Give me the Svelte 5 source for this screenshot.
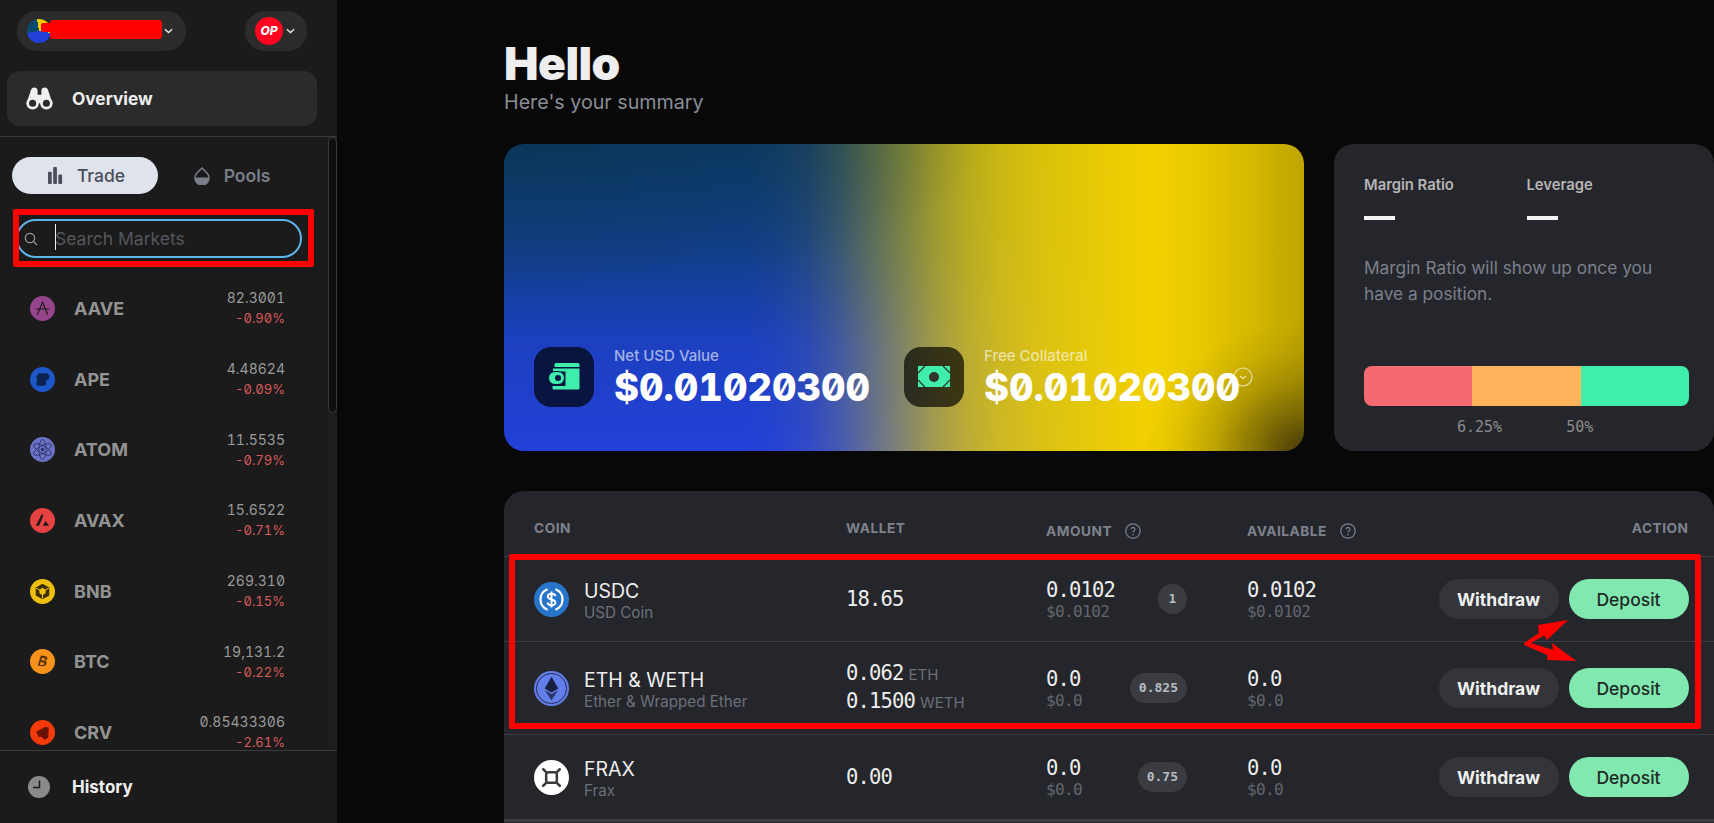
<script lang="ts">
  const markets = [
    { id: "aave", name: "AAVE", price: "82.3001", change: "-0.90%" },
    { id: "ape", name: "APE", price: "4.48624", change: "-0.09%" },
    { id: "atom", name: "ATOM", price: "11.5535", change: "-0.79%" },
    { id: "avax", name: "AVAX", price: "15.6522", change: "-0.71%" },
    { id: "bnb", name: "BNB", price: "269.310", change: "-0.15%" },
    { id: "btc", name: "BTC", price: "19,131.2", change: "-0.22%" },
    { id: "crv", name: "CRV", price: "0.85433306", change: "-2.61%" },
  ];

  const coins = [
    { id: "usdc", name: "USDC", sub: "USD Coin", wallet: [{ v: "18.65", u: "" }], amount: "0.0102", amountUsd: "$0.0102", weight: "1", avail: "0.0102", availUsd: "$0.0102" },
    { id: "eth", name: "ETH & WETH", sub: "Ether & Wrapped Ether", wallet: [{ v: "0.062", u: "ETH" }, { v: "0.1500", u: "WETH" }], amount: "0.0", amountUsd: "$0.0", weight: "0.825", avail: "0.0", availUsd: "$0.0" },
    { id: "frax", name: "FRAX", sub: "Frax", wallet: [{ v: "0.00", u: "" }], amount: "0.0", amountUsd: "$0.0", weight: "0.75", avail: "0.0", availUsd: "$0.0" },
  ];
</script>

{#snippet chevron()}
  <svg class="chev" viewBox="0 0 10 6" width="9" height="6"><path d="M1 1l4 3.6L9 1" fill="none" stroke="#e8e8e8" stroke-width="1.6" /></svg>
{/snippet}

{#snippet help()}
  <svg viewBox="0 0 16 16" width="16" height="16"><circle cx="8" cy="8" r="7.2" fill="none" stroke="#7e828c" stroke-width="1.2" /><path d="M6.1 6.3a1.9 1.9 0 1 1 2.9 1.6c-.7.4-1 .8-1 1.6" fill="none" stroke="#7e828c" stroke-width="1.2" /><circle cx="8" cy="11.6" r=".8" fill="#7e828c" /></svg>
{/snippet}

{#snippet marketIcon(id: string)}
  <svg viewBox="0 0 24 24" width="25" height="25">
    {#if id === "aave"}
      <circle cx="12" cy="12" r="12" fill="#96458d" />
      <path d="M7 18L12 6l5 12M5.500 12.500h13" fill="none" stroke="#1b1b1b" stroke-width="1.100" />
    {:else if id === "ape"}
      <circle cx="12" cy="12" r="12" fill="#1b57c8" />
      <path d="M6 10l2-4h7c3 0 4 2 3.500 4-.4 2-2 2.500-3 2.500V17l-2 1H7l-1-2 1-3z" fill="#0d2450" />
    {:else if id === "atom"}
      <circle cx="12" cy="12" r="12" fill="#6c72c6" />
      <g fill="none" stroke="#2a2d62" stroke-width=".8">
        <ellipse cx="12" cy="12" rx="3.500" ry="9.500" />
        <ellipse cx="12" cy="12" rx="3.500" ry="9.500" transform="rotate(60 12 12)" />
        <ellipse cx="12" cy="12" rx="3.500" ry="9.500" transform="rotate(120 12 12)" />
      </g>
      <circle cx="12" cy="12" r="1.600" fill="#2a2d62" />
    {:else if id === "avax"}
      <circle cx="12" cy="12" r="12" fill="#e84142" />
      <path d="M11 6.500h2l-.2.800L8.700 17H5.500zM14.800 12.500L18.500 17h-6z" fill="#1b1b1b" />
    {:else if id === "bnb"}
      <circle cx="12" cy="12" r="12" fill="#eebf0c" />
      <path d="M12 4.500l6.500 3.700v7.600L12 19.500l-6.500-3.700V8.200zM12 8.500l-3 1.800v3.400l3 1.800 3-1.800v-3.400z" fill="#3a2f08" fill-rule="evenodd" />
      <path d="M12 12.200V19M12 12.200L6 8.800M12 12.200l6-3.400" stroke="#eebf0c" stroke-width="1" />
    {:else if id === "btc"}
      <circle cx="12" cy="12" r="12" fill="#f7931a" />
      <path d="M9.500 6.500h4c2 0 3 1 2.700 2.600-.2 1-.9 1.700-1.800 1.900 1.200.3 1.900 1.200 1.600 2.600-.4 2-1.800 2.900-4 2.900H8l1.500-9.600zM11 8.600l-.4 2.300h2.100c1 0 1.400-.5 1.500-1.200.1-.7-.3-1.100-1.200-1.100zM10.300 12.800l-.4 2.600h2.300c1 0 1.600-.4 1.700-1.300.1-.8-.4-1.300-1.400-1.300z" fill="#5a3408" fill-rule="evenodd" transform="rotate(8 12 12)" />
    {:else}
      <circle cx="12" cy="12" r="12" fill="#f43a0a" />
      <path d="M6 11l9-4.500 3 1-.5 9.500-3.500 2-3-3H8z" fill="#6a1208" />
    {/if}
  </svg>
{/snippet}

{#snippet coinIcon(id: string)}
  <svg viewBox="0 0 36 36" width="35" height="35">
    {#if id === "usdc"}
      <circle cx="18" cy="18" r="18" fill="#2775ca" />
      <path d="M14 7.500a11.200 11.200 0 0 0 0 21M22 7.500a11.200 11.200 0 0 1 0 21" fill="none" stroke="#fff" stroke-width="2.200" />
      <path d="M22 14.500c-.3-1.600-1.800-2.500-4-2.500s-3.800 1-3.800 2.900c0 4.100 7.800 2 7.800 6.200 0 2-1.700 2.900-4 2.900s-3.900-1-4.100-2.700M18 9.800v16.400" fill="none" stroke="#fff" stroke-width="2" />
    {:else if id === "eth"}
      <circle cx="18" cy="18" r="18" fill="#627eea" />
      <circle cx="18" cy="18" r="15.500" fill="none" stroke="#252a4e" stroke-width="1" />
      <path d="M18 6l-7 12 7 4 7-4z" fill="#1a2040" />
      <path d="M18 24l-7-4.500L18 30l7-10.500z" fill="#2b3468" />
    {:else}
      <circle cx="18" cy="18" r="18" fill="#fff" />
      <rect x="12.500" y="12.500" width="11" height="11" rx="2.500" fill="none" stroke="#3a3a3a" stroke-width="2.600" />
      <path d="M12 12L9.500 9.500M24 12l2.500-2.500M12 24l-2.500 2.500M24 24l2.500 2.500" stroke="#3a3a3a" stroke-width="2.600" stroke-linecap="round" />
    {/if}
  </svg>
{/snippet}

<div class="page">
  <aside class="sidebar">
    <div class="top">
      <button class="account">
        <span class="avatar"></span>
        {@render chevron()}
      </button>
      <button class="network">
        <span class="op">OP</span>
        {@render chevron()}
      </button>
    </div>

    <div class="overview">
      <svg viewBox="0 0 28 24" width="27" height="23">
        <path d="M4.500 5C5 2 6.500.5 8.500.5s3.500 1.200 3.500 3.500v4h4V4c0-2.300 1.500-3.500 3.500-3.500S23 2 23.500 5L27.500 17h-27z" fill="#f0f0f0" />
        <circle cx="6.800" cy="17" r="6.500" fill="#f0f0f0" /><circle cx="21.200" cy="17" r="6.500" fill="#f0f0f0" />
        <circle cx="6.800" cy="17" r="3.700" fill="#2b2b2b" /><circle cx="21.200" cy="17" r="3.700" fill="#2b2b2b" />
      </svg>
      <span>Overview</span>
    </div>

    <div class="middle">
      <div class="list">
        <div class="tabs">
          <button class="tab active">
            <svg viewBox="0 0 16 18" width="15" height="17"><rect x="0" y="5" width="4" height="13" rx="1" /><rect x="5.500" y="0" width="4" height="18" rx="1" /><rect x="11" y="8" width="4" height="10" rx="1" /></svg>
            Trade
          </button>
          <button class="tab pools">
            <svg viewBox="0 0 16 18" width="16" height="18"><path d="M8 1l5 5a7 7 0 1 1-10 0z" fill="none" stroke="#7a7e8a" stroke-width="1.500" /><path d="M1 10.500h14a7 7 0 0 1-14 0z" fill="#7a7e8a" /></svg>
            Pools
          </button>
        </div>

        <div class="search">
          <svg viewBox="0 0 14 14" width="14" height="14"><circle cx="6" cy="6" r="4.700" fill="none" stroke="#9a9a9a" stroke-width="1.200" /><path d="M9.500 9.500L13 13" stroke="#9a9a9a" stroke-width="1.200" /></svg>
          <span class="caret"></span>
          <input type="text" placeholder="Search Markets" />
        </div>

        <div class="markets">
          {#each markets as m}
            <div class="market">
              {@render marketIcon(m.id)}
              <span class="market-name">{m.name}</span>
              <div class="market-vals">
                <span class="price">{m.price}</span>
                <span class="change">{m.change}</span>
              </div>
            </div>
          {/each}
        </div>
      </div>
      <div class="scrolltrack"><div class="scrollthumb"></div></div>
    </div>

    <div class="history">
      <svg viewBox="0 0 22 22" width="22" height="22"><circle cx="11" cy="11" r="11" fill="#8a8a8a" /><path d="M11.500 4.500v7H5" fill="none" stroke="#1b1b1b" stroke-width="1.500" /></svg>
      <span>History</span>
    </div>
  </aside>

  <main class="main">
    <h1>Hello</h1>
    <p class="summary">Here's your summary</p>

    <div class="cards">
      <section class="hero">
        <div class="stat">
          <div class="stat-icon">
            <svg viewBox="0 0 60 60" width="60" height="60">
              <path d="M22 16h22a1.500 1.500 0 0 1 1.500 1.500V20H20.500v-2.500A1.500 1.500 0 0 1 22 16z" fill="#3eeeaa" />
              <path d="M19 21.500h26.500V41a1.500 1.500 0 0 1-1.500 1.500H20a1.500 1.500 0 0 1-1.500-1.500V39h13V24.500H19z" fill="#3eeeaa" />
              <rect x="14.500" y="24.500" width="16" height="13" rx="6.500" fill="#3eeeaa" stroke="#0a1545" stroke-width="1" />
              <circle cx="24" cy="31" r="3" fill="#0a1545" />
            </svg>
          </div>
          <div>
            <div class="stat-label">Net USD Value</div>
            <div class="stat-value">$0.01020300</div>
          </div>
        </div>
        <div class="stat">
          <div class="stat-icon">
            <svg viewBox="0 0 60 60" width="60" height="60">
              <rect x="14" y="19" width="32" height="21" fill="#3eeeaa" />
              <circle cx="30" cy="30" r="5" fill="#33332a" />
              <path d="M14 26l7-7M46 26l-7-7M14 33l7 7M46 33l-7 7" stroke="#33332a" stroke-width="1.300" />
            </svg>
          </div>
          <div class="stat-text">
            <div class="stat-label">Free Collateral</div>
            <div class="stat-value">$0.01020300</div>
            <svg class="stat-more" viewBox="0 0 20 20" width="20" height="20"><circle cx="10" cy="10" r="9" fill="none" stroke="#ffffff" stroke-opacity=".7" stroke-width="1.100" /><path d="M7 9l3 2.600L13 9" fill="none" stroke="#ffffff" stroke-opacity=".7" stroke-width="1.200" /></svg>
          </div>
        </div>
      </section>

      <section class="margin">
        <div class="margin-head">
          <div class="metric"><span>Margin Ratio</span><i></i></div>
          <div class="metric"><span>Leverage</span><i></i></div>
        </div>
        <p>Margin Ratio will show up once you have a position.</p>
        <div class="bar"><span class="red"></span><span class="orange"></span><span class="green"></span></div>
        <div class="bar-labels"><span>6.25%</span><span>50%</span></div>
      </section>
    </div>

    <section class="table">
      <div class="row head">
        <div>COIN</div>
        <div>WALLET</div>
        <div class="low">AMOUNT {@render help()}</div>
        <div class="low">AVAILABLE {@render help()}</div>
        <div class="action">ACTION</div>
      </div>
      {#each coins as c}
        <div class="row" class:tall={c.id === "eth"}>
          <div class="coin">
            {@render coinIcon(c.id)}
            <div class="stack">
              <span class="coin-name">{c.name}</span>
              <span class="coin-sub">{c.sub}</span>
            </div>
          </div>
          <div class="wallet">
            {#each c.wallet as w}
              <div><span class="num">{w.v}</span>{#if w.u}<span class="unit">{w.u}</span>{/if}</div>
            {/each}
          </div>
          <div class="amount">
            <div class="stack values">
              <span class="num">{c.amount}</span>
              <span class="usd">{c.amountUsd}</span>
            </div>
            <span class="badge">{c.weight}</span>
          </div>
          <div class="stack values">
            <span class="num">{c.avail}</span>
            <span class="usd">{c.availUsd}</span>
          </div>
          <div class="actions">
            <button class="btn withdraw">Withdraw</button>
            <button class="btn deposit">Deposit</button>
          </div>
        </div>
      {/each}
      <div class="row last"></div>
    </section>
  </main>

  <!-- red markup drawn over the screenshot -->
  <div class="redact"></div>
  <div class="mark mark-search"></div>
  <div class="mark mark-table"></div>
  <svg class="arrows" viewBox="0 0 54 42" width="54" height="42">
    <path d="M0 23L15 13 14 5 44 0 23 20 20 15.500 7 23 29 30 28 23 52.500 41 23 40 23.500 35 0 25z" fill="#ff0000" />
  </svg>
</div>

<style>
  :global(body) {
    margin: 0;
    background: #080808;
    overflow: hidden;
  }

  * {
    box-sizing: border-box;
  }

  button {
    border: none;
    font-family: inherit;
  }

  .page {
    position: relative;
    display: flex;
    width: 1714px;
    height: 823px;
    overflow: hidden;
    font-family: Inter, "Liberation Sans", sans-serif;
    color: #eee;
  }

  .sidebar {
    width: 337px;
    flex-shrink: 0;
    display: flex;
    flex-direction: column;
    background: #1b1b1b;
  }

  .top {
    display: flex;
    justify-content: space-between;
    padding: 11px 30px 0 17px;
  }

  .account,
  .network {
    display: flex;
    align-items: center;
    height: 40px;
    border-radius: 20px;
    background: #2c2c2c;
  }

  .account {
    width: 169px;
    padding: 0 0 0 10px;
  }

  .avatar {
    width: 24px;
    height: 24px;
    border-radius: 50%;
    background: conic-gradient(#f0d000 0 100deg, #2340d8 100deg 260deg, #0b4a6e 260deg 350deg, #f0d000 350deg);
  }

  .account .chev {
    margin-left: 113px;
  }

  .network {
    width: 62px;
    padding: 0 0 0 10px;
  }

  .op {
    width: 28px;
    height: 28px;
    border-radius: 50%;
    background: #ff0420;
    color: #fff;
    font: italic 800 12px/28px Inter, sans-serif;
    text-align: center;
  }

  .network .chev {
    margin-left: 3px;
  }

  .overview {
    display: flex;
    align-items: center;
    gap: 19px;
    height: 55px;
    margin: 20px 20px 0 7px;
    padding-left: 19px;
    border-radius: 13px;
    background: #2b2b2b;
    font-size: 17.3px;
    font-weight: 700;
  }

  .middle {
    display: flex;
    flex: 1;
    min-height: 0;
    margin-top: 10px;
    border-top: 1px solid #3a3a3a;
  }

  .list {
    flex: 1;
    min-width: 0;
    overflow: hidden;
    padding-top: 20px;
  }

  .scrolltrack {
    width: 9px;
    background: #1e1e1e;
  }

  .scrollthumb {
    height: 276px;
    background: #0e0e0e;
    border: 1px solid #3a3a3a;
    border-radius: 5px;
  }

  .tabs {
    display: flex;
    padding-left: 12px;
  }

  .tab {
    display: flex;
    align-items: center;
    justify-content: center;
    gap: 14px;
    width: 146px;
    height: 37px;
    border-radius: 19px;
    background: none;
    color: #7a7e8a;
    font-size: 17.5px;
    font-weight: 600;
  }

  .tab svg {
    flex-shrink: 0;
  }

  .tab.active {
    padding-left: 9px;
    background: #dfe3ec;
    color: #4a4e5a;
    font-weight: 500;
  }

  .tab.active svg {
    fill: #4a4e5a;
  }

  .tab.pools {
    padding-left: 8px;
  }

  .search {
    position: relative;
    display: flex;
    align-items: center;
    width: 286px;
    height: 39px;
    margin: 25px 0 15px 16px;
    padding-left: 6px;
    border: 2px solid #5fb4ea;
    border-radius: 20px;
  }

  .search input {
    flex: 1;
    min-width: 0;
    margin-left: 17px;
    padding: 0;
    border: none;
    outline: none;
    background: none;
    color: #eee;
    font: 400 17.5px Inter, sans-serif;
  }

  .search input::placeholder {
    color: #55575c;
    opacity: 1;
  }

  .caret {
    position: absolute;
    left: 37px;
    top: 3px;
    width: 1px;
    height: 26px;
    background: #eee;
  }

  .market {
    display: flex;
    align-items: center;
    height: 70.7px;
    padding: 0 43px 0 30px;
  }

  .market-name {
    margin-left: 19px;
    color: #939393;
    font-size: 18px;
    font-weight: 700;
  }

  .market-vals {
    display: flex;
    flex-direction: column;
    align-items: flex-end;
    margin-left: auto;
    font-feature-settings: "zero", "tnum";
  }

  .price {
    color: #9a9a9a;
    font-size: 14px;
    line-height: 20px;
  }

  .change {
    color: #d65a5a;
    font-size: 13px;
    line-height: 20px;
  }

  .history {
    display: flex;
    align-items: center;
    gap: 22px;
    height: 73px;
    padding-left: 28px;
    border-top: 1px solid #3a3a3a;
    font-size: 17px;
    font-weight: 700;
  }

  .main {
    flex: 1;
    min-width: 0;
    padding: 41px 0 0 167px;
  }

  h1 {
    margin: 0;
    font-size: 46px;
    font-weight: 900;
    line-height: 44px;
    letter-spacing: -0.5px;
    color: #eee;
  }

  .summary {
    margin: 6px 0 0;
    color: #8b8e96;
    font-size: 19.7px;
    line-height: 23px;
  }

  .cards {
    display: flex;
    gap: 30px;
    margin-top: 30px;
  }

  .hero {
    display: flex;
    align-items: flex-end;
    width: 800px;
    height: 307px;
    padding: 0 0 44px 30px;
    border-radius: 20px;
    background:
      radial-gradient(ellipse 60% 50% at 0% 0%, rgba(10, 50, 70, 0.45), transparent),
      radial-gradient(ellipse 20% 42% at 100% 100%, rgba(50, 40, 10, 0.85) 0%, rgba(50, 40, 10, 0.5) 28%, rgba(50, 40, 10, 0.22) 55%, rgba(50, 40, 10, 0.07) 78%, transparent 100%),
      linear-gradient(to right, transparent 82%, rgba(60, 50, 0, 0.06) 88%, rgba(60, 50, 0, 0.16) 94%, rgba(60, 50, 0, 0.28) 100%),
      linear-gradient(to right, transparent 30%, rgba(240, 208, 0, 0.02) 34%, rgba(240, 208, 0, 0.07) 38%, rgba(240, 208, 0, 0.18) 42%, rgba(240, 208, 0, 0.33) 46%, rgba(240, 208, 0, 0.48) 50%, rgba(240, 208, 0, 0.63) 54%, rgba(240, 208, 0, 0.75) 58%, rgba(240, 208, 0, 0.83) 62%, rgba(240, 208, 0, 0.91) 68%, #f0d000 80%),
      linear-gradient(to bottom, #0c3a68 0%, #123f8c 35%, #1c40c0 65%, #2340d8 100%);
  }

  .stat {
    display: flex;
    gap: 20px;
    width: 370px;
  }

  .stat-icon {
    width: 60px;
    height: 60px;
    border-radius: 17px;
    background: rgba(0, 0, 0, 0.68);
  }

  .stat-icon svg {
    display: block;
  }

  .stat-text {
    position: relative;
  }

  .stat-label {
    color: rgba(255, 255, 255, 0.6);
    font-size: 15px;
    font-weight: 500;
    line-height: 17px;
  }

  .stat-value {
    margin-top: 3px;
    color: #fff;
    font: 800 38px/40px Inter, sans-serif;
    font-feature-settings: "zero", "tnum";
  }

  .stat-more {
    position: absolute;
    right: -13px;
    top: 20px;
  }

  .margin {
    width: 380px;
    height: 307px;
    padding: 32px 25px 0 30px;
    border-radius: 20px;
    background: #25262b;
  }

  .margin-head {
    display: flex;
  }

  .metric {
    width: 163px;
    color: #b5b5b5;
    font-size: 14.8px;
    font-weight: 600;
    line-height: 18px;
  }

  .metric i {
    display: block;
    width: 31px;
    height: 4px;
    margin-top: 22px;
    background: #f4f4f4;
  }

  .margin p {
    margin: 35px 0 0;
    color: #7b808c;
    font-size: 17.3px;
    line-height: 26px;
  }

  .bar {
    display: flex;
    height: 40px;
    margin-top: 59px;
    overflow: hidden;
    border-radius: 8px;
  }

  .bar span {
    display: block;
  }

  .red {
    width: 108px;
    background: #f56a70;
  }

  .orange {
    width: 109px;
    background: #ffb45c;
  }

  .green {
    flex: 1;
    background: #3eeeaa;
  }

  .bar-labels {
    display: flex;
    margin-top: 12px;
    padding-left: 93px;
    color: #8a8a8a;
    font: 15px/18px "DejaVu Sans Mono", monospace;
  }

  .bar-labels span:last-child {
    margin-left: 64px;
  }

  .table {
    width: 1210px;
    margin-top: 40px;
    border-radius: 20px 20px 0 0;
    background: #25262b;
  }

  .row {
    display: grid;
    grid-template-columns: 312px 200px 201px 1fr auto;
    align-items: center;
    height: 85px;
    padding: 0 25.5px 0 30px;
    border-top: 1px solid #3c3e43;
  }

  .row.tall {
    height: 93px;
  }

  .row.head {
    height: 65px;
    padding-top: 9px;
    border-top: none;
    color: #7e828c;
    font-size: 13.7px;
    font-weight: 700;
    letter-spacing: 0.5px;
  }

  .row.last {
    border-top: 3px solid #3c3e43;
  }

  .low {
    display: flex;
    align-items: center;
    gap: 13px;
    padding-top: 6px;
  }

  .action {
    text-align: right;
  }

  .coin {
    display: flex;
    align-items: center;
    gap: 15px;
  }

  .stack {
    display: flex;
    flex-direction: column;
  }

  .coin .stack {
    padding-top: 3px;
  }

  .coin-name {
    color: #eee;
    font-size: 19.5px;
    line-height: 24px;
  }

  .coin-sub {
    color: #6c707a;
    font-size: 15.2px;
    line-height: 19px;
  }

  .values {
    padding-top: 2px;
  }

  .num {
    color: #eee;
    font: 20.5px/24px "DejaVu Sans Mono", monospace;
    letter-spacing: -0.85px;
  }

  .usd {
    color: #62666f;
    font: 16px/20px "DejaVu Sans Mono", monospace;
    letter-spacing: -0.6px;
  }

  .wallet div {
    display: flex;
    align-items: baseline;
    line-height: 26px;
  }

  .wallet .num {
    line-height: 26px;
  }

  .unit {
    margin-left: 5px;
    color: #6b6f78;
    font-size: 15px;
  }

  .amount {
    display: flex;
    align-items: center;
    justify-content: space-between;
    padding-right: 60px;
  }

  .badge {
    min-width: 29px;
    height: 30px;
    padding: 0 9px;
    border-radius: 15px;
    background: #3a3c42;
    color: #b8bbc2;
    font: 700 13px/30px "DejaVu Sans Mono", monospace;
    text-align: center;
  }

  .actions {
    display: flex;
    gap: 10px;
  }

  .btn {
    width: 120px;
    height: 40px;
    border-radius: 20px;
    font-size: 17.5px;
  }

  .withdraw {
    background: #33353a;
    color: #f0f0f0;
    font-weight: 700;
  }

  .deposit {
    background: #81e8b0;
    color: #1f2a25;
    font-weight: 500;
  }

  .redact {
    position: absolute;
    left: 50px;
    top: 20px;
    width: 112px;
    height: 19px;
    border-radius: 3px;
    background: #ff0000;
  }

  .redact::before {
    content: "";
    position: absolute;
    left: -9px;
    top: 3px;
    width: 12px;
    height: 9px;
    border-radius: 2px;
    background: #ff0000;
  }

  .mark {
    position: absolute;
    border: 6px solid #ff0000;
    border-radius: 2px;
    pointer-events: none;
  }

  .mark-search {
    left: 13px;
    top: 209px;
    width: 301px;
    height: 58px;
  }

  .mark-table {
    left: 509px;
    top: 554px;
    width: 1192px;
    height: 175px;
  }

  .arrows {
    position: absolute;
    left: 1524px;
    top: 620px;
  }
</style>
